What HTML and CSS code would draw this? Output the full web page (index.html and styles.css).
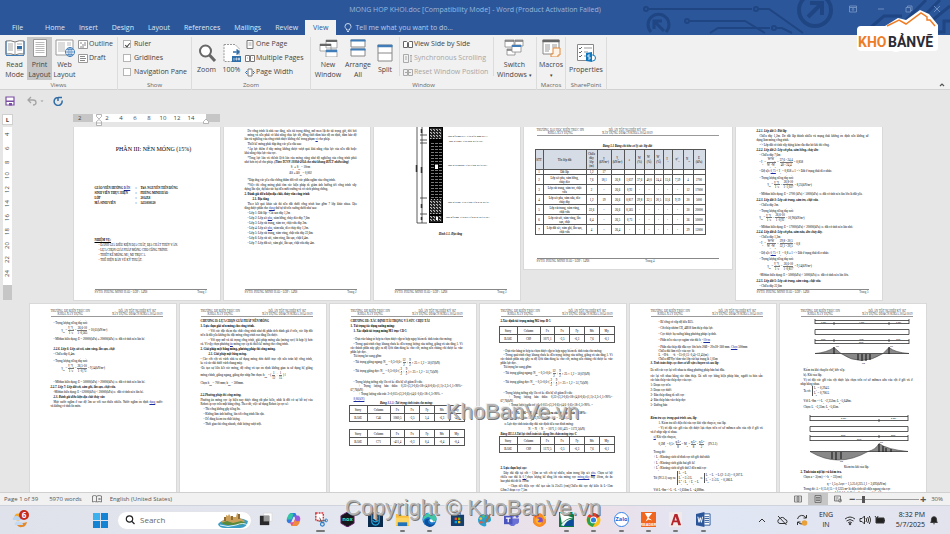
FILE: index.html
```html
<!DOCTYPE html>
<html lang="vi">
<head>
<meta charset="utf-8">
<title>MONG HOP KHOI.doc - Word</title>
<link rel="stylesheet" href="styles.css">
</head>
<body>
<header class="top">
  <svg class="circuit" viewBox="0 0 320 35" fill="none" stroke="#1f4583" stroke-width="2" aria-hidden="true">
    <circle cx="16" cy="9" r="2"/><path d="M19 9H122M129 9h10l34 24"/><circle cx="126" cy="9" r="2"/>
    <circle cx="57" cy="21" r="2"/><path d="M60 21h55l20 12M80 33l8-5h52"/><circle cx="144" cy="28" r="2"/><path d="M147 28h5l10 5"/>
    <path d="M21 32a10.500 10.500 0 1 1 15 0" stroke-width="3"/><path d="M34 31L24 21M24 29v-8h8" stroke-width="3"/>
    <circle cx="185" cy="10" r="16" stroke-width="4"/><path d="M178 17L191 4M180 3h12v12" stroke-width="4"/>
    <path d="M240 28l14-12h18M270 26l26-26M288 22L310 0M294 27l26-21M284 32h30V21h6" stroke-width="3"/>
  </svg>
  <div class="titlebar">
    <h1>MONG HOP KHOI.doc [Compatibility Mode] - Word (Product Activation Failed)</h1>
    <div class="wins">
      <button aria-label="Ribbon display"><svg viewBox="0 0 8 8"><path d="M.5 1h7v6h-7zM.5 2.500h7M4 6V3.500M3 4.500l1-1 1 1"/></svg></button>
      <button aria-label="Minimize"><svg viewBox="0 0 8 8"><path d="M1 4h6"/></svg></button>
      <button aria-label="Restore"><svg viewBox="0 0 8 8"><path d="M1 2.500h4.500V7H1zM2.500 2V1H7v4.500H6"/></svg></button>
      <button aria-label="Close"><svg viewBox="0 0 8 8"><path d="M1 1l6 6M7 1L1 7"/></svg></button>
    </div>
  </div>
  <nav class="tabs">
    <button class="file">File</button><button>Home</button><button>Insert</button><button>Design</button><button>Layout</button><button>References</button><button>Mailings</button><button>Review</button><button class="on">View</button>
    <label class="tell"><svg viewBox="0 0 8 10"><path d="M2.500 7V6C1.500 5 1 4.500 1 3.500a3 3 0 0 1 6 0C7 4.500 6.500 5 5.500 6v1zM3 8.500h2"/></svg><input type="text" placeholder="Tell me what you want to do..." aria-label="Tell me what you want to do"></label>
  </nav>
</header>

<svg class="logo" viewBox="0 0 86 44" role="img" aria-label="KHOBANVE">
  <path d="M1 21q0-4 4-4h24l13-8 8 2L64 1l9 4 9 11v23q0 3-4 3h-34q-4 2-8 0H5q-4 0-4-4z" fill="#fff"/>
  <path d="M31 17l12-6 7 4L65 4l6 4v3h3l5 6" fill="none" stroke="#ee7d27" stroke-width="1.500"/>
  <text x="2" y="38" fill="#ee7d27">KHO</text><text x="32" y="38" fill="#2b2b35">BẢNVẼ</text>
</svg>

<section class="ribbon">
  <div class="grp g-views">
    <div class="tools">
      <button class="big"><svg viewBox="0 0 20 18"><path d="M1 2q5-1 9 1 4-2 9-1v13q-5-1-9 1-4-2-9-1z" fill="#fff" stroke="#777"/><path d="M10 3v13M3 5h5M3 7h5M3 9h5M3 11h5M12 5h5M12 11h5" stroke="#aaa"/><path d="M1 16.500h18M1 2v14M19 2v14" stroke="#3f7cb8"/><path d="M12 7h5v3h-5z" fill="#2f6da8"/></svg>Read<br>Mode</button>
      <button class="big sel"><svg viewBox="0 0 20 18"><path d="M3.500.5h13v17h-13z" fill="#fff" stroke="#999"/><path d="M5.500 3.500h9M5.500 5.500h9M5.500 7.500h9M5.500 9.500h9M5.500 11.500h9M5.500 13.500h9" stroke="#bbb"/></svg>Print<br>Layout</button>
      <button class="big"><svg viewBox="0 0 20 18"><path d="M1 1h17v15H1z" fill="#fff" stroke="#999"/><path d="M3 4h7M3 6h7M3 8h7M3 10h7M3 12h7M12 4h4M12 6h4" stroke="#bbb"/><circle cx="15" cy="13" r="4.500" fill="#fff" stroke="#3f7cb8"/><path d="M10.500 13h9M15 8.500v9M12 10.500h6M12 15.500h6" stroke="#3f7cb8" stroke-width=".7"/><ellipse cx="15" cy="13" rx="2" ry="4.500" fill="none" stroke="#3f7cb8" stroke-width=".7"/></svg>Web<br>Layout</button>
      <div class="stack two">
        <button><svg viewBox="0 0 10 9"><path d="M.5.5h9v8h-9z" fill="#fff" stroke="#999"/><path d="M2 3h2M4 5h4M2 7h4M6 3h2" stroke="#888"/></svg>Outline</button>
        <button><svg viewBox="0 0 10 9"><path d="M.5.5h9v8h-9z" fill="#fff" stroke="#999"/><path d="M2 2.500h5M2 4.500h6M2 6.500h5" stroke="#888"/></svg>Draft</button>
      </div>
    </div><h2>Views</h2>
  </div>
  <div class="grp g-show">
    <div class="tools"><div class="stack">
      <label><input type="checkbox" checked>Ruler</label>
      <label><input type="checkbox">Gridlines</label>
      <label><input type="checkbox">Navigation Pane</label>
    </div></div><h2>Show</h2>
  </div>
  <div class="grp g-zoom">
    <div class="tools">
      <button class="big"><svg viewBox="0 0 20 18"><circle cx="8.500" cy="7" r="5.500" fill="#fff" stroke="#666" stroke-width="2"/><path d="M12.500 11l5.500 6" stroke="#666" stroke-width="3"/></svg>Zoom</button>
      <button class="big"><svg viewBox="0 0 20 18"><path d="M2 .5h11l4 4v13H2z" fill="#fff" stroke="#999" stroke-dasharray="2 1"/><path d="M11 8h6M14.500 5.500L17 8l-2.500 2.500" fill="none" stroke="#2f6da8" stroke-width="1.500"/><path d="M10 12h9v6h-9z" fill="#2f6da8"/><path d="M12 14v2.500M14 14h1v2h-1zM16.500 14h1v2h-1z" stroke="#fff" stroke-width=".6" fill="none"/></svg>100%</button>
      <div class="stack">
        <button><svg viewBox="0 0 10 9"><path d="M2 .5h6v8H2z" fill="#fff" stroke="#777"/><path d="M3.500 3h3M3.500 5h3" stroke="#aaa"/></svg>One Page</button>
        <button><svg viewBox="0 0 10 9"><path d="M.5 1.500h4v6h-4zM5.500 1.500h4v6h-4z" fill="#fff" stroke="#777"/><path d="M2 4h1M7 4h1" stroke="#aaa"/></svg>Multiple Pages</button>
        <button><svg viewBox="0 0 10 9"><path d="M3 1h4v7H3z" fill="#fff" stroke="#777"/><path d="M2 3L.5 4.500 2 6M8 3l1.500 1.500L8 6" fill="none" stroke="#2f6da8"/></svg>Page Width</button>
      </div>
    </div><h2>Zoom</h2>
  </div>
  <div class="grp g-window">
    <div class="tools">
      <button class="big w30"><svg viewBox="0 0 20 18"><path d="M8 1h11v8H8zM2 5h11v7H2zM8 11h11v7H8z" fill="#fff" stroke="#888" stroke-width=".7"/><path d="M8 2h11M2 6h11" stroke="#666" stroke-width="2"/><path d="M8 12h11" stroke="#3f7cb8" stroke-width="2.500"/></svg>New<br>Window</button>
      <button class="big w30"><svg viewBox="0 0 20 18"><path d="M3 1h14v7H3zM3 10h14v7H3z" fill="#fff" stroke="#888"/><path d="M2.500 1.500h15M2.500 10.500h15" stroke="#3f7cb8" stroke-width="2"/></svg>Arrange<br>All</button>
      <button class="big w24"><svg viewBox="0 0 20 18"><path d="M3 1h14v16H3zM3 9h14" fill="#fff" stroke="#888"/><path d="M2.500 2h15" stroke="#3f7cb8" stroke-width="2.500"/></svg>Split</button>
      <div class="stack edged">
        <button><svg viewBox="0 0 10 9"><path d="M.5 1.500h3l1 1v5h-4zM9.500 1.500h-3l-1 1v5h4z" fill="#fff" stroke="#666"/></svg>View Side by Side</button>
        <button disabled><svg viewBox="0 0 10 9"><path d="M.5.5h5v8h-5zM8 1v7M7 2l1-1 1 1M7 7l1 1 1-1M2 3h2M2 5h2" fill="none" stroke="#aaa"/></svg>Synchronous Scrolling</button>
        <button disabled><svg viewBox="0 0 10 9"><path d="M.5 1.500h4v6h-4zM5.500 1.500h4v6h-4zM2 4.500h6" fill="none" stroke="#aaa"/></svg>Reset Window Position</button>
      </div>
      <button class="big w37"><svg viewBox="0 0 20 18"><path d="M1 1h9v7H1zM11 1h8v6h-8zM3 10h8v6H3z" fill="#fff" stroke="#888" stroke-width=".8"/><path d="M1 2h9M11 2h8M3 11h5" stroke="#777" stroke-width="1.500"/><path d="M8 6h9v7H8z" fill="#fff" stroke="#888" stroke-width=".8"/><path d="M8 7h9" stroke="#3f7cb8" stroke-width="2"/></svg>Switch<br>Windows <small>▾</small></button>
    </div><h2>Window</h2>
  </div>
  <div class="grp">
    <div class="tools"><button class="big w29"><svg viewBox="0 0 20 18"><path d="M2 1h16v14H2z" fill="#fff" stroke="#888"/><path d="M1.500 2h17" stroke="#666" stroke-width="2.500"/><path d="M4 6h5M4 8h5M4 10h5M4 12h4M11 6h5M11 8h5" stroke="#999"/><path d="M12 9h7v7h-2v2h-7v-3h2z" fill="#fdf3e7" stroke="#e08a3c"/></svg>Macros<br><small>▾</small></button></div><h2>Macros</h2>
  </div>
  <div class="grp">
    <div class="tools"><button class="big w40"><svg viewBox="0 0 20 18"><path d="M1.500.5h16v16h-16z" fill="#fff" stroke="#888"/><path d="M3 4l1 1 2-2M3 8l1 1 2-2M3 12l1 1 2-2" fill="none" stroke="#666"/><path d="M8 4h8M8 8h4M8 12h3" stroke="#999"/><circle cx="16.500" cy="14" r="3" fill="#fff" stroke="#1177bd"/><path d="M10 9l6-1v10l-6-1z" fill="#1177bd"/><path d="M14 11h-2v2h2v2h-2" fill="none" stroke="#fff" stroke-width=".8"/></svg>Properties</button></div><h2>SharePoint</h2>
  </div>
  <button class="fold" aria-label="Collapse ribbon"><svg viewBox="0 0 6 5"><path d="M1 4l2-2 2 2" fill="none" stroke="#555" stroke-width="1.200"/></svg></button>
</section>

<div class="qat">
  <button aria-label="Save"><svg viewBox="0 0 10 10"><path d="M1 1h8v8H1z" fill="#fff" stroke="#7a4fa3" stroke-width="1.200"/><path d="M1 4.500h8v1.500H1z" fill="#7a4fa3"/><path d="M4 7h3v2.500H4z" fill="#7a4fa3"/></svg></button>
  <button aria-label="Undo"><svg viewBox="0 0 10 10"><path d="M1 4h5q3 0 3 2.500T6 9M4 1L1 4l3 3" fill="none" stroke="#a5a5a5" stroke-width="1.300"/></svg></button>
  <button class="dd" aria-label="Undo list"><svg viewBox="0 0 4 10"><path d="M.5 4.500h3L2 6z" fill="#999"/></svg></button>
  <button class="again" aria-label="Repeat"><svg viewBox="0 0 10 10"><path d="M6 1.500A4 4 0 1 0 9 4.500M5 1v4M5 1.500h4" fill="none" stroke="#2f6da8" stroke-width="1.500"/></svg></button>
</div>

<div class="rulerrow">
  <button class="tabstop" aria-label="Left tab">L</button>
  <div class="hruler"><span class="m">2</span><span class="w"><i>2</i><i>4</i><i>6</i><i>8</i><i>10</i><i>12</i><i>14</i></span><span class="m"></span>
    <svg class="mk first" viewBox="0 0 6 12"><path d="M.5.5h5v2L3 5 .5 2.500zM.5 11.500v-4L3 5.500l2.500 2v4zM.5 9h5" fill="#fff" stroke="#999" stroke-width=".7"/></svg>
    <svg class="mk last" viewBox="0 0 6 12"><path d="M.5 9.500v-2L3 5l2.500 2.500v2z" fill="#fff" stroke="#999" stroke-width=".7"/></svg>
  </div>
</div>

<main class="work">
  <div class="vruler"><i>4</i><i>6</i><i>8</i><i>10</i><i>12</i><i>14</i><i>16</i><i>18</i><i>20</i><i>22</i><i>24</i></div>
  <div class="canvas">
    <div class="prow r1">
      <article class="page">
        <h3 class="cover">PHẦN III: NỀN MÓNG (15%)</h3>
        <div class="who"><span>GIÁO VIÊN HƯỚNG <u>DẪN</u></span><span>:</span><span>ThS. NGUYỄN TIẾN DŨNG</span><span>SINH VIÊN THỰC HIỆN</span><span>:</span><span>PHÙNG MINH HÀO</span><span>LỚP</span><span>:</span><span>2014X8</span><span>MÃ SINH VIÊN</span><span>:</span><span>1451030120</span></div>
        <div class="task"><p class="b ul">NHIỆM VỤ:</p><p>- ĐÁNH GIÁ ĐIỀU KIỆN ĐỊA CHẤT, ĐỊA CHẤT THỦY VĂN.</p><p>- LỰA CHỌN GIẢI PHÁP MÓNG CHO CÔNG TRÌNH.</p><p>- THIẾT KẾ MÓNG M1, M2 TRỤC 5.</p><p>- THỂ HIỆN BẢN VẼ KỸ THUẬT.</p></div>
        <footer><span>SVTH: PHÙNG MINH HÀO - LỚP : 14X8</span><span>Trang 1</span></footer>
      </article>
      <article class="page t2">
        <p class="j in">Do công trình là nhà cao tầng, nên tải trọng đứng, mô men lật do tải trọng gió, đòi hỏi<br>móng và nền phải có khả năng chịu lực tốt, đồng thời đảm bảo độ ổn định, đảm bảo độ</p>
        <p>lún và nghiêng của công trình được khống chế trong phạm <u>vi</u> cho phép.</p>
        <p class="s1 in">Thiết kế móng phải đáp ứng các yêu cầu sau:</p>
        <p class="s1 j in">*Áp lực thêm ở đáy móng không được vượt quá khả năng chịu lực của nền đất hoặc</p><p>khả năng chịu lực của cọc.</p>
        <p class="s1 j in">*Tổng lực lún và chênh lệch lún của móng cũng như độ nghiêng của công trình phải</p><p>nhỏ hơn trị số cho phép. <b><i>(Theo TCVN 10304-2014 cho nhà khung BTCT nhiều tầng)</i></b></p>
        <p class="s1 c">S<sub>x</sub> ≤ S<sub>gh</sub> = 10cm</p><p class="s1 c">ΔS ≤ ΔS<sub>gh</sub> = 0,002</p>
        <p class="s3 in">*Đáp ứng các yêu cầu chống thấm đối với các phần ngầm của công trình.</p>
        <p class="s1 j in">*Việc thi công móng phải tìm các biện pháp để giảm ảnh hưởng tới công trình xây</p><p>dựng lân cận, dự báo tác hại đến môi trường và có cách phòng chống.</p>
        <p class="s1 b">2. Đánh giá điều kiện địa chất, thủy văn công trình</p><p class="s1 b in2">2.1. Địa tầng</p>
        <p class="s1 j in">Theo kết quả khảo sát thì nền đất dưới công trình bao gồm 7 lớp khác nhau. Địa</p><p>tầng được phân cho <u>dạng</u> thứ tự từ trên xuống dưới như sau:</p>
        <div class="list in"><p>- Lớp 1: Đất lấp - Cát san dày 1,2m</p><p>- Lớp 2: Lớp sét <u>pha</u>, xám hồng, chảy dẻo dày 7,6m</p><p>- Lớp 3: Lớp cát trung, xám tro, chặt vừa dày 2m.</p><p>- Lớp 4: Lớp sét <u>pha</u>, xám nâu, dẻo chảy dày 1,2m.</p><p>- Lớp 5: Lớp cát trung, xám vàng, chặt vừa dày 22,6m.</p><p>- Lớp 6: Lớp cát sỏi, xám vàng, lẫn sạn, chặt 6,4m.</p><p>- Lớp 7: Lớp đất sét, xám ghi, lẫn sạn, chặt vừa dày 4m.</p></div>
        <footer><span>SVTH: PHÙNG MINH HÀO - LỚP : 14X8</span><span>Trang 2</span></footer>
      </article>
      <article class="page">
        <svg class="bore" viewBox="0 0 100 98">
          <defs><pattern id="dots" width="3" height="3" patternUnits="userSpaceOnUse"><path d="M0 0h3v3H0z" fill="#222"/><path d="M0 1l1-1M2 2l1 1M0 3h1" stroke="#fff" stroke-width=".7"/></pattern>
          <pattern id="dash" width="4" height="3" patternUnits="userSpaceOnUse"><path d="M0 0h4v3H0z" fill="#000"/><path d="M0 1.500h3" stroke="#aaa" stroke-width=".7"/></pattern></defs>
          <path d="M34 0h14v96H34z" fill="#000"/><path d="M35 1h12v11H35zM35 72h12v15H35z" fill="url(#dots)"/><path d="M35 16h12v55H35z" fill="url(#dash)"/><path d="M35 89h12v6H35z" fill="url(#dots)"/>
          <path d="M40 38h3v4h-3zM41 90h2v3h-2z" fill="#fff"/>
          <path d="M22 0v96h10M27 0v96M25 8h7M25 13h7M25 16h7M25 71h7M25 87h7" stroke="#333" fill="none" stroke-width=".8"/>
          <path d="M21.500 38v7M26.500 40v6M26.500 77v4M26.500 90v3M26.500 2v4" stroke="#333" stroke-width="1.500"/>
          <text x="53" y="10">LỚP ĐẤT SÉT PHA, XÁM NÂU, DẺO CHẢY</text><text x="54" y="15">LỚP CÁT BỤI, XÁM TRO, CHẶT VỪA</text><text x="53" y="39">LỚP CÁT TRUNG, XÁM VÀNG, CHẶT VỪA</text><text x="53" y="76">LỚP CÁT SỎI, XÁM VÀNG, LẪN SẠN, CHẶT</text><text x="51" y="91">LỚP ĐẤT SÉT, XÁM GHI, LẪN SẠN, CHẶT VỪA</text>
        </svg>
        <p class="c b it cap">Hình 1.1. Địa tầng</p>
        <footer><span>SVTH: PHÙNG MINH HÀO - LỚP : 14X8</span><span>Trang 3</span></footer>
      </article>
      <article class="page land">
        <div class="hd"><span>TRƯỜNG ĐẠI HỌC KIẾN TRÚC HN<br>KHOA XÂY DỰNG</span><span>ĐỒ ÁN TỐT NGHIỆP KỸ SƯ<br>XÂY DỰNG DD&amp;CN KHÓA 2014-2019</span></div>
        <p class="c b it cap4">Bảng 1.1 Bảng chỉ tiêu cơ lý các lớp đất</p>
        <table class="soil">
          <colgroup><col class="c8"><col><col class="c11"><col class="c14"><col class="c13"><col class="c11"><col class="c9"><col class="c10"><col class="c9"><col class="c9"><col class="c11"><col class="c10"><col class="c12"></colgroup>
          <tr><th>STT</th><th>Tên lớp đất</th><th>Chiều<br>dày<br>lớp<br>(m)</th><th>γ<br>(kN/m³)</th><th>γ<sub>s</sub><br>(kN/m³)</th><th>e</th><th>W<br>(%)</th><th>W<sub>L</sub><br>(%)</th><th>W<sub>P</sub><br>(%)</th><th>I<sub>L</sub></th><th>φ°<sub>c</sub></th><th>N<sub>30</sub></th><th>E<br>(kPa)</th></tr>
          <tr class="lo"><td>1</td><td>Đất lấp</td><td>1,2</td><td>17</td><td></td><td></td><td></td><td></td><td></td><td></td><td></td><td></td><td></td></tr>
          <tr><td>2</td><td>Lớp sét pha, xám hồng,<br>chảy dẻo</td><td>7,6</td><td>18,1</td><td>26,8</td><td>1,037</td><td>37,6</td><td>40,0</td><td>24,4</td><td>15,6</td><td>7,59</td><td>4</td><td>2700</td></tr>
          <tr><td>3</td><td>Lớp cát trung, xám tro, chặt<br>vừa</td><td>2</td><td>-</td><td>26,6</td><td>0,92</td><td>-</td><td>-</td><td>-</td><td>-</td><td>-</td><td>12</td><td>17000</td></tr>
          <tr><td>4</td><td>Lớp sét pha, xám nâu, dẻo<br>chảy dày</td><td>1,2</td><td>19</td><td>26,6</td><td>0,817</td><td>29,8</td><td>32,1</td><td>20,5</td><td>11,6</td><td>9,19</td><td>20</td><td>5000</td></tr>
          <tr><td>5</td><td>Lớp cát trung, xám vàng,<br>chặt vừa</td><td>22,6</td><td>-</td><td>26,6</td><td>0,565</td><td>-</td><td>-</td><td>-</td><td>-</td><td>-</td><td>30</td><td>20000</td></tr>
          <tr><td>6</td><td>Lớp cát sỏi, xám vàng, lẫn<br>sạn, chặt</td><td>6,4</td><td>-</td><td>26,5</td><td>0,73</td><td>-</td><td>-</td><td>-</td><td>-</td><td>-</td><td>36</td><td>50000</td></tr>
          <tr><td>7</td><td>Lớp đất sét, xám ghi, lẫn sạn,<br>chặt vừa</td><td>4</td><td>-</td><td>26,4</td><td>-</td><td>-</td><td>-</td><td>-</td><td>-</td><td>-</td><td>29</td><td>12000</td></tr>
        </table>
        <footer><span>SVTH: PHÙNG MINH HÀO - LỚP : 14X8</span><span class="mid">Trang 4</span></footer>
      </article>
      <article class="page t2">
        <p class="b it">2.2.1. Lớp đất 1: Đất lấp</p>
        <p class="s1 j in">Chiều dày 1,2m. Do đất lấp thành nhiều và mạng thái không ổn định nên không sử</p><p>dụng làm móng công trình.</p>
        <p class="s1 in">=&gt; Lớp đất có tính xây dựng kém cần đào bỏ khi thi công.</p>
        <p class="s1 b it">2.2.2. Lớp đất 2: Lớp sét pha, xám hồng, chảy dẻo</p>
        <p class="s1 in">- Chiều dày 7,6m</p>
        <div class="f in"><span>- I<sub>L</sub> =</span><span class="fr"><span>W-W<sub>P</sub></span><span>W<sub>L</sub>-W<sub>P</sub></span></span><span>=</span><span class="fr"><span>37,6 - 24,4</span><span>40 - 24,4</span></span><span>= 0,858</span></div>
        <p class="s2 in">- Độ sệt: <u>0,75</u> &lt; I<sub>L</sub> = 0,858 ≤ 1 =&gt; Đất ở trạng thái dẻo nhão.</p>
        <p class="s2 in">- Trọng lượng riêng đẩy nổi:</p>
        <div class="f in3"><span>γ<sub>đn</sub> =</span><span class="fr"><span>γ<sub>s</sub>-γ<sub>n</sub></span><span>1+e</span></span><span>=</span><span class="fr"><span>26,8-10</span><span>1+1,037</span></span><span>= 8,25(kN/m³)</span></div>
        <p class="s2 in">- Môđun biến dạng: E = 2700 (kPa) &lt; 5000(kPa) ⇒ đất có tính nén lún lớn là đất yếu.</p>
        <p class="s2 b it">2.2.3. Lớp đất 3: Lớp cát trung, xám tro, chặt vừa.</p>
        <p class="s1 in">- Chiều dày 2m.</p><p class="s2 in">- Trọng lượng riêng đẩy nổi:</p>
        <div class="f in"><span>γ<sub>đn</sub> =</span><span class="fr"><span>γ<sub>s</sub>-γ<sub>n</sub></span><span>1+e</span></span><span>=</span><span class="fr"><span>26,6-10</span><span>1+0,92</span></span><span>= 10,90(kN/m³)</span></div>
        <p class="s2 in">- Môđun biến dạng: E = 17000(kPa) &lt; 20000(kPa) ⇒ đất có tính nén lún nhỏ.</p>
        <p class="s1 b it">2.2.4. Lớp đất 4: Lớp sét pha, xám nâu, dẻo chảy dày.</p>
        <p class="s1 in">- Chiều dày 1,2m</p>
        <div class="f in"><span>- I<sub>L</sub> =</span><span class="fr"><span>W-W<sub>P</sub></span><span>W<sub>L</sub>-W<sub>P</sub></span></span><span>=</span><span class="fr"><span>29,8 - 20,5</span><span>32,1 - 20,5</span></span><span>= 0,8</span></div>
        <p class="s2 in">- Độ sệt: <u>0,75</u> &lt; I<sub>L</sub> = 0,8 ≤ 1 =&gt; Đất ở trạng thái dẻo nhão.</p>
        <p class="s2 in">- Trọng lượng riêng đẩy nổi:</p>
        <div class="f in3"><span>γ<sub>đn</sub> =</span><span class="fr"><span>γ<sub>s</sub>-γ<sub>n</sub></span><span>1+e</span></span><span>=</span><span class="fr"><span>26,6-10</span><span>1+0,817</span></span><span>= 9,14(kN/m³)</span></div>
        <p class="s2 in">-Môđun biến dạng: E = 5000(kPa) &lt; 5000(kPa) ⇒ đất có tính nén lún lớn.</p>
        <p class="s2 b it">2.2.5. Lớp đất 5: Lớp cát trung, xám vàng, chặt vừa.</p>
        <p class="s1 in">- Chiều dày 22,6m</p>
        <footer><span>SVTH: PHÙNG MINH HÀO - LỚP : 14X8</span><span>Trang 5</span></footer>
      </article>
    </div>

    <div class="prow r2">
      <article class="page">
        <div class="hd"><span>TRƯỜNG ĐH KIẾN TRÚC HN<br>KHOA XÂY DỰNG</span><span>ĐỒ ÁN TỐT NGHIỆP KỸ SƯ<br>XÂY DỰNG DD&amp;CN KHÓA 2014-2019</span></div>
        <p class="s4 in">- Trọng lượng riêng đẩy nổi:</p>
        <div class="f in3"><span>γ<sub>đn</sub> =</span><span class="fr"><span>γ<sub>s</sub>-γ<sub>n</sub></span><span>1+e</span></span><span>=</span><span class="fr"><span>26,6-10</span><span>1+0,565</span></span><span>= 10,61(kN/m³)</span></div>
        <p class="s2 in">- Môđun biến dạng: E = 20000(kPa) ≤ 20000(kPa) ⇒ đất có tính nén lún bé</p>
        <p class="s6 b it in">2.2.6. Lớp 6: Lớp cát sỏi, xám vàng, lẫn sạn, chặt</p>
        <p class="s1 in">- Chiều dày 6,4m.</p><p class="s3 in">- Trọng lượng riêng đẩy nổi:</p>
        <div class="f in3"><span>γ<sub>đn</sub> =</span><span class="fr"><span>γ<sub>s</sub>-γ<sub>n</sub></span><span>1+e</span></span><span>=</span><span class="fr"><span>26,5-10</span><span>1+0,73</span></span><span>= 9,54(kN/m³)</span></div>
        <p class="s7 in">- Môđun biến dạng: E = 50000(kPa) &gt; 20000(kPa) ⇒ đất có tính nén lún bé.</p>
        <p class="s1 b it">2.2.7. Lớp 7: Lớp đất sét, xám ghi, lẫn sạn, chặt vừa.</p>
        <p class="s1 in">-Môđun biến dạng: E =12000(kPa) &lt; 20000(kPa) ⇒ đất có tính nén lún bé.</p>
        <p class="s1 b it in">2.3. Đánh giá điều kiện địa chất thủy văn</p>
        <p class="s1 j in">Mực nước ngầm ở cao độ 3m so với cao thiên nhiên. Nước ngầm ổn định <u>dạng</u> nước</p><p>và không có tính ăn mòn.</p>
      </article>
      <article class="page">
        <div class="hd"><span>TRƯỜNG ĐH KIẾN TRÚC HN<br>KHOA XÂY DỰNG</span><span>ĐỒ ÁN TỐT NGHIỆP KỸ SƯ<br>XÂY DỰNG DD&amp;CN KHÓA 2014-2019</span></div>
        <p class="s2 b">CHƯƠNG II: LỰA CHỌN GIẢI PHÁP NỀN MÓNG</p>
        <p class="s1 b">1. Lựa chọn giải nền móng cho công trình.</p>
        <p class="s1 j in2">- Với các đặc điểm địa chất công trình như đã phân tích đánh giá ở trên, các lớp đất</p><p>trên là đất yếu không thể đặt móng công trình cao tầng lên được.</p>
        <p class="s1 j in2">- Với quy mô và tải trọng công trình, giải pháp móng sâu (móng cọc) là hợp lý hơn</p><p>cả. Vì vậy chọn phương <u>án</u> móng cọc ép để thiết kế móng cho công trình.</p>
        <p class="s1 b">2. Giải pháp mặt bằng móng, phương pháp thi công móng.</p><p class="s1 b it in2">2.1. Giải pháp mặt bằng móng.</p>
        <p class="s1 j">- Các cốt cột và vách nhà ta sử dụng móng đơn dưới trục cột nên toàn bộ công trình,</p><p>kể cả các đài dưới vách thang máy.</p>
        <p class="s1 j">-Để tạo sự liên kết các móng, độ cứng và tạo ổn định không gian ta sử dụng hệ giằng</p>
        <div class="f"><span>móng chính, giằng ngang, giằng dọc nhịp 9m chọn: h<sub>gm</sub> = (</span><span class="fr"><span>1</span><span>12</span></span><span>÷</span><span class="fr"><span>1</span><span>15</span></span><span>) l</span></div>
        <p class="s1">Chọn h<sub>gm</sub> = 700 mm; b<sub>gm</sub> = 300mm.</p>
        <p class="s7 b it">2.2.Phương pháp thi công móng.</p>
        <p class="s1 j">Phương án móng cọc ép hiện nay được dùng rất phổ biến, nhất là đối có sự hỗ trợ của</p><p>Robot ép cọc trên mặt bằng rộng. Theo đó, việc sử dụng Robot ép cọc sẽ:</p>
        <div class="list in"><p>- Thi công không gây tiếng ồn.</p><p>- Không làm ảnh hưởng, lún tới công trình lân cận.</p><p>- Dễ dàng kiểm tra chất lượng.</p><p>- Thời gian thi công nhanh, chất lượng vượt trội.</p></div>
      </article>
      <article class="page calc">
        <div class="hd"><span>TRƯỜNG ĐH KIẾN TRÚC HN<br>KHOA XÂY DỰNG</span><span>ĐỒ ÁN TỐT NGHIỆP KỸ SƯ<br>XÂY DỰNG DD&amp;CN KHÓA 2014-2019</span></div>
        <p class="s2 b">CHƯƠNG III: XÁC ĐỊNH TẢI TRỌNG VÀ SỨC CHỊU TẢI</p>
        <p class="s1 b">1. Tải trọng tác dụng xuống móng:</p><p class="s1 b in">1. Xác định tải trọng móng M1 trục CD-5</p>
        <p class="s4 in">- Dựa vào bảng tổ hợp ta chọn được cặp tổ hợp nguy hiểm để tính toán cho móng:</p>
        <p class="s1 j in">- Trong quá trình chạy khung chưa kể đến trọng lượng của tường, giằng và sàn tầng 1. Vì</p><p class="j">các thành phần này gây ra độ lệch tâm đáng kể cho cốt, móng nên chúng chỉ được kể vào</p><p>phần lực dọc.</p><p class="in">Tải trọng bổ sung gồm:</p>
        <div class="f in"><span>- Tải trọng giằng ngang: N<sub>gn</sub> = 0,3×0,6×</span><span class="fr"><span>12</span><span>2</span></span><span>+</span><span class="fr"><span>9</span><span>2</span></span><span>× 25 × 1,2 = 50,67(kN)</span></div>
        <div class="f in"><span>- Tải trọng giằng dọc: N<sub>gd</sub> = 0,3×0,6×(</span><span class="fr"><span>2</span><span>2</span></span><span>+</span><span class="fr"><span>9</span><span>2</span></span><span>) × 25 × 1,2 = 51,75(kN)</span></div>
        <p class="s4 in">- Trọng lượng tường xây lên có kể đến hệ số giảm lỗ cửa:</p>
        <p class="j in2">+ Trọng lượng bản thân: 0,22×(3,3-0,6)×18×(4,6-0,6)×(1,1)×3,3×1,1×90%=</p><p>67,76(kN)</p><p class="in2">+ Trọng lượng vữa trát: 2×0,015×(3,3-0,6)×(4,6+0,6)×18×1,3×90%. =</p><p class="s1 in"><u>8,86(kN)</u></p>
        <p class="c b it">Bảng <u>3.1.1</u>: Tải trọng tính toán cho móng:</p>
        <table class="load"><tr><th>Story</th><th>Column</th><th>Fx</th><th>Fx</th><th>Fy</th><th>Mx</th><th>My</th></tr><tr><td>BASE</td><td>C46</td><td>1060,5</td><td>-3,5</td><td>5,4</td><td>-6,3</td><td>-4,5</td></tr></table>
        <table class="load s7"><tr><th>Story</th><th>Column</th><th>Fx</th><th>Fx</th><th>Fy</th><th>Mx</th><th>My</th></tr><tr><td>BASE</td><td>C71</td><td>-411,4</td><td>-0,3</td><td>0,4</td><td>-0,4</td><td>-0,4</td></tr></table>
      </article>
      <article class="page calc">
        <div class="hd"><span>TRƯỜNG ĐH KIẾN TRÚC HN<br>KHOA XÂY DỰNG</span><span>ĐỒ ÁN TỐT NGHIỆP KỸ SƯ<br>XÂY DỰNG DD&amp;CN KHÓA 2014-2019</span></div>
        <p class="s2 b">2.Xác định tải trọng móng M2 trục B-5</p>
        <table class="load s3"><tr><th>Story</th><th>Column</th><th>Fx</th><th>Fx</th><th>Fy</th><th>Mx</th><th>My</th></tr><tr><td>BASE</td><td>C89</td><td>1071,1</td><td>-3,5</td><td>-6,3</td><td>7,6</td><td>-6,1</td></tr></table>
        <p class="s6 in">- Dựa vào bảng tổ hợp ta chọn được cặp tổ hợp nguy hiểm để tính toán cho móng:</p>
        <p class="j in">- Trong quá trình chạy khung chưa kể đến trọng lượng của tường, giằng và sàn tầng 1. Vì</p><p class="j">các thành phần này gây ra độ lệch tâm đáng kể cho cốt, móng nên chúng chỉ được kể vào</p><p>phần lực dọc.</p><p class="in">Tải trọng bổ sung gồm:</p>
        <div class="f in"><span>- Tải trọng giằng ngang: N<sub>gn</sub> = 0,3×0,6×</span><span class="fr"><span>12</span><span>2</span></span><span>+</span><span class="fr"><span>9</span><span>2</span></span><span>× 25 × 1,2 = 50,67(kN)</span></div>
        <div class="f in"><span>- Tải trọng giằng dọc: N<sub>gd</sub> = 0,3×0,6×(</span><span class="fr"><span>2</span><span>2</span></span><span>+</span><span class="fr"><span>9</span><span>2</span></span><span>) × 25 × 1,2 = 51,75(kN)</span></div>
        <p class="s4 in">- Trọng lượng tường xây lên có kể đến hệ số giảm lỗ cửa:</p>
        <p class="j in2">+ Trọng lượng bản thân: 0,22×(3,3-0,6)×18×(4,6-0,6)×(1,1)×3,3×1,1×90%=</p><p>67,76(kN)</p><p class="in2">+ Trọng lượng vữa trát: 2×0,015×(3,3-0,6)×(4,6+0,6)×18×1,3×90%. =</p>
        <p class="s4 b in">Tổng: 67,76+8,86 = 76,6 (kN). Ngoài ra còn tải trọng sàn là 10%:</p><p class="s1 in">⇒ Trọng lượng sàn: N<sub>s</sub> = 3,95×25×1,1×0,1 = 10,86 (kN)</p><p class="s1 in">⇒ Lực dọc tính toán đáy đài xác định tiêu cao đỉnh móng:</p><p class="s1 c">N<sub>tt</sub> = N<sub>1</sub> + N<sub>bs</sub> = 1071,1+101,425 = 1172,5(kN)</p>
        <p class="s1 b it">Bảng III.1.3.Tải lực tính toán tác dụng lên chân móng trục C</p>
        <table class="load"><tr><th>Story</th><th>Column</th><th>Fx</th><th>Fx</th><th>Fy</th><th>Mx</th><th>My</th></tr><tr><td>BASE</td><td>C89</td><td>1172,5</td><td>-3,5</td><td>-6,3</td><td>7,6</td><td>-6,1</td></tr></table>
        <p class="s12 b">2. Lựa chọn loại cọc:</p>
        <p class="s1 j in">Đáy đài đặt tại cốt - 1,6m so với cốt tự nhiên, nằm trong lớp sét <u>pha</u>. Chọn sơ bộ</p>
        <p class="j">chiều cao đài là <u>0,7</u>,chọn lượng bê tông lót của móng cọc <u>móng,đáy</u> dày 10cm, do ăn</p><p>bao phủ đài đó là 10cm</p><p class="s1 j in2">- Chọn tiết diện cọc chế tạo sẵn là 25x25 (cm),Chiều dài cọc dự kiến là L=15m</p><p>Gồm 2 đoạn <u>cọc</u> 7,5m</p>
      </article>
      <article class="page">
        <div class="hd"><span>TRƯỜNG ĐH KIẾN TRÚC HN<br>KHOA XÂY DỰNG</span><span>ĐỒ ÁN TỐT NGHIỆP KỸ SƯ<br>XÂY DỰNG DD&amp;CN KHÓA 2014-2019</span></div>
        <div class="list in2 first"><p>- Bê tông có cấp độ bền B25.</p><p>- Cốt thép nhóm CII, 4Ø18 làm thép chịu lực.</p><p>- Cọc được hạ xuống bằng phương pháp ép tĩnh.</p><p>- Phần trên của cọc ngàm vào đài h<sub>1</sub>=<u>10cm</u></p><p>- Phần râu thép đặt đầu cọc lớn hơn 20Ø = 20x18=360 mm. <u>Chọn</u> 500mm</p></div>
        <p class="in2">Chiều dài làm việc của cọc là:</p><p class="in2">L<sub>c</sub> =H-h<sub>ngàm</sub>-h<sub>1</sub> =15-(0,15+0,4)=12,45(m)</p><p class="in2">Chiều dài cọc cắm vào lớp cát hạt trung là 1,05m</p>
        <p class="b it">3. Tính toán thép cọc theo sơ đồ vận chuyển và cẩu lắp</p>
        <p class="s3">Để nối các cọc lại với nhau ta dùng phương pháp hàn hai đầu.</p>
        <p class="s2 j">các lại với nhau bằng các tấm thép. Để nối cọc bằng biện pháp hàn, người ta hàn sẵn</p><p>các bản thép vào thép dọc của cọc.</p>
        <div class="list"><p>1: Đoạn cọc trên</p><p>2: Đoạn cọc dưới</p><p>3- Bản thép dùng để nối cọc</p><p>4- Bản thép hàn vào thép dọc</p><p>5- Đường hàn</p></div>
        <p class="s8 b it">Kiểm tra cọc trong quá trình cẩu, lắp</p><p class="s1 in2">1. Kiểm tra tiết diện thi của cọc khi vận chuyển, cẩu lắp.</p>
        <p class="s1 j in2">- Vị trí đặt các gối của cột được lựa chọn trên cơ sở mômen uốn của cột ở gối và</p><p>và ở nhịp xấp xỉ nhau.</p><p class="s1 in"><u>a)</u> Khi vận chuyển,</p>
        <div class="f in2"><span>0,5M<sub>1</sub> = 0,5×</span><span class="fr"><span>q.L²</span><span>8</span></span><span>= M<sub>2</sub> =</span><span class="fr"><span>q.L²</span><span>8</span></span><span>-</span><span class="fr"><span>q.L²</span><span>2</span></span><span>&nbsp; &nbsp; (IV.3.1)</span></div>
        <p class="s1 in">Trong đó:</p><div class="list in"><p>+ L<sub>1</sub>: Khoảng cách từ đỉnh cọc tới gối thứ nhất</p><p>+ L<sub>2</sub>: Khoảng cách giữa hai gối kê</p><p>+ L<sub>3</sub>: Khoảng cách từ gối thứ 2 đến mũi cọc</p></div>
        <div class="f tall in"><span>Từ (IV.3.1) suy ra:</span><span class="sys">L<sub>1</sub> = L<sub>3</sub><br>L<sub>2</sub> = 2√2.L<sub>1</sub><br>L<sub>1</sub> + L<sub>2</sub> + L<sub>3</sub> = L</span><span>⇒</span><span class="sys">L<sub>1</sub> = L<sub>3</sub> = L/(2+2√2) = 0,207.L<br>L<sub>2</sub> = 2√2.L<sub>1</sub> = 0,586.L</span></div>
        <p class="s3 in">Với L=8m=&gt; L<sub>1</sub>=L<sub>3</sub>=1,656m; L<sub>2</sub>=4,688m.</p>
      </article>
      <article class="page">
        <div class="hd"><span>TRƯỜNG ĐH KIẾN TRÚC HN<br>KHOA XÂY DỰNG</span><span>ĐỒ ÁN TỐT NGHIỆP KỸ SƯ<br>XÂY DỰNG DD&amp;CN KHÓA 2014-2019</span></div>
        <svg class="beam b1" viewBox="0 0 112 48">
          <path d="M14 3.500h94M14 6.500h94M14 12.500h94v5H14zM14 23.500h94M14 26.500h94M14 2v5M108 2v5M33 5v3M88 5v3M14 22v5M108 22v5M33 22v3M88 22v3" fill="none" stroke="#333" stroke-width=".8"/>
          <path d="M14 36.500h94" stroke="#333" stroke-width=".8"/><path d="M14 36.500q12-1 19-6l7 6zM40 36.500q20 14 42 0zM82 36.500l6-6q6 5 20 6z" fill="#888" stroke="#444" stroke-width=".6"/><path d="M33 30v7M57 37v6M61 37v7M65 37v7M69 37v6M88 30v7" stroke="#111"/>
          <text x="20" y="6">1.656</text><text x="58" y="6">4.688</text><text x="95" y="6">1.656</text><text x="20" y="23">1656</text><text x="58" y="23">4688</text><text x="95" y="23">1656</text><text x="58" y="26">8000</text><text x="35" y="30">M1</text><text x="61" y="47">M2</text><text x="89" y="30">M1</text>
        </svg>
        <p class="in">Kiểm tra khi chuyên chở, bốc xếp.</p><p class="s1 in">b). Khi cẩu lắp.</p>
        <p class="s1 j in">Vị trí đặt các gối của cột được lựa chọn trên cơ sở mômen uốn của cột ở gối và ở</p><p>nhịp bằng nhau.</p>
        <div class="f in"><span>Ta có:</span><span class="sys">L<sub>1</sub> = 0,294.L<br>L<sub>2</sub> = 0,706.L</span></div>
        <p class="s3 in">Với L=8m =&gt; L<sub>1</sub> =2,352m; L<sub>2</sub>=5,648m.</p><p class="s1 in">Chọn: L<sub>1</sub> =2,35m; L<sub>2</sub>=5,65m.</p>
        <svg class="beam b2" viewBox="0 0 112 56">
          <path d="M9 7.500h98M9 11.500h98M9 17.500h98v5H9zM9 27.500h98M9 31.500h98M9 6v6M107 6v6M78 10v3M9 26v6M107 26v6M78 26v3" fill="none" stroke="#333" stroke-width=".8"/>
          <path d="M9 42.500h98" stroke="#333" stroke-width=".8"/><path d="M9 42.500q28 17 58 0zM67 42.500q8-2 11-8 8 6 29 8z" fill="#888" stroke="#444" stroke-width=".6"/><path d="M31 43v7M35 43v8M40 43v7M78 35v8M82 37v6M85 39v4M90 40v3" stroke="#111"/>
          <text x="40" y="10">5.650</text><text x="90" y="10">2.350</text><text x="40" y="27">5650</text><text x="90" y="27">2350</text><text x="56" y="31">8000</text><text x="79" y="34">M1</text><text x="39" y="53">M2</text>
        </svg>
        <p class="c">Kiểm tra khi cẩu lắp.</p><p class="s1 b">2. Tính toán nội lực và kiểm tra.</p><p class="s1 in">Chọn a = 3(cm) =&gt; h<sub>0</sub> = 22(cm)</p><p class="s2 c">q = 1,5.γ.Acọc = 1,5.25.0,225.1,1 = 3,693(kN/m)</p><p class="s1 in">Trong đó: A = 0,15.0,15 = 0,1225 m² là diện tích tiết diện ngang của cọc</p><p class="c">γ = 1,1 là hệ số độ tin cậy tải trọng bản thân</p>
      </article>
    </div>
  </div>
  <div class="mark mark1">KhoBanVe.vn</div>
</main>

<footer class="status">
  <span class="pg">Page 1 of 39</span><span class="wd">5970 words</span>
  <svg class="proof" viewBox="0 0 10 8"><path d="M.5 1q2-1 4 0v6q-2-1-4 0zM5 1q2-1 4.500 0v6Q7 6 5 7M6.500 3l2 2m0-2l-2 2" fill="none" stroke="#666" stroke-width=".8"/></svg>
  <span>English (United States)</span>
  <div class="views">
    <button aria-label="Read mode"><svg viewBox="0 0 8 8"><path d="M.5 1H4v6H.5zM4 1h3.500v6H4zM1.500 3h1.500M1.500 5h1.500M5 3h1.500M5 5h1.500"/></svg></button>
    <button class="on" aria-label="Print layout"><svg viewBox="0 0 8 8"><path d="M1 .5h6v7H1zM2 2.500h4M2 4h4M2 5.500h4"/></svg></button>
    <button aria-label="Web layout"><svg viewBox="0 0 8 8"><path d="M.5 1h6v5h-6zM1.500 3h3M1.500 5h2"/><circle cx="6" cy="5.500" r="1.500"/></svg></button>
  </div>
  <div class="zoomer"><button aria-label="Zoom out">−</button><input type="range" min="10" max="500" value="60" aria-label="Zoom"><button aria-label="Zoom in">+</button><span>30%</span></div>
</footer>

<footer class="taskbar">
  <div class="left">
    <button class="weather" aria-label="Weather"><svg viewBox="0 0 18 20"><circle cx="6" cy="7" r="3.500" fill="#f6a623"/><path d="M1 8q3-4 6-1 4-1 4 3H2q-2 0-1-2z" fill="#b9d3f2"/><path d="M4 12q1 6 6 5 4 0 5-5-5 2-11 0z" fill="#e58a2b"/><path d="M3 13q2-3 5-1 3 0 3 3H4q-2 0-1-2z" fill="#c3daf4"/><circle cx="12" cy="5" r="5" fill="#c42b1c"/><text x="12" y="8" text-anchor="middle" fill="#fff">6</text></svg></button>
    <button class="start" aria-label="Start"><svg viewBox="0 0 16 16"><path d="M0 0h7.500v7.500H0zM8.500 0H16v7.500H8.500zM0 8.500h7.500V16H0zM8.500 8.500H16V16H8.500z" fill="#1583d4"/><path d="M0 0h7.500v7.500H0z" fill="#3cb1ee"/></svg></button>
    <label class="search"><svg viewBox="0 0 10 10"><circle cx="4.500" cy="4" r="3.200" fill="none" stroke="#222" stroke-width="1.200"/><path d="M7 6.500L9.500 9" stroke="#222" stroke-width="1.300"/></svg><input type="text" placeholder="Search" aria-label="Search">
      <svg class="castle" viewBox="0 0 32 17"><path d="M1 12q5-5 12-4 10-4 18 1-1 7-8 7H8q-6 0-7-4z" fill="#3b9dc4"/><path d="M4 10l5-4v-3l2 1 1-2 2 3 5 0 1-4 3 2v3l5 3-4 3H8z" fill="#caa05a"/><path d="M4 11l6-2 6 2 8-2 5 2-6 2H9z" fill="#5c8a3a"/><path d="M7 5h2v4H7zM14 4h2v4h-2zM21 2h2v5h-2z" fill="#8f6a35"/><path d="M3 13q8 3 16 0t11 0" stroke="#d8f0f8" fill="none"/></svg></label>
  </div>
  <div class="apps">
    <button aria-label="Task view"><svg viewBox="0 0 16 16"><path d="M6 1h9v9H6z" fill="#fff" stroke="#ddd"/><path d="M2 4h10v10H2z" fill="#2a2a2a"/><path d="M6 4h6v6H6z" fill="#999"/></svg></button>
    <button aria-label="Copilot"><svg viewBox="0 0 16 16"><path d="M5 1h5l2 4H8L5 12H3q-3-1-2-5z" fill="#2f7de0"/><path d="M3 8l3 0L8 2 5 1Q2 2 1 8z" fill="#35c4a4"/><path d="M11 15H6l-2-4h4l3-7h2q3 1 2 5z" fill="#e0529c"/><path d="M13 5l-2 0-3 7-2 3h5q3-1 4-6z" fill="#f08a3c"/><path d="M9 4h5l1 5-3 1-2-1z" fill="#9658dd"/></svg></button>
    <button class="run wide" aria-label="Snipping tool"><svg viewBox="0 0 16 16"><path d="M3 1h8v8H3z" fill="#fff" stroke="#d13438" stroke-dasharray="2 1" stroke-width="1.500"/><path d="M7 6l3 6M14 9L6 10" stroke="#666"/><circle cx="10" cy="13" r="2" fill="none" stroke="#2a7ec9" stroke-width="1.300"/><circle cx="14" cy="9" r="1.500" fill="none" stroke="#2a7ec9"/></svg></button>
    <button aria-label="Nox"><svg viewBox="0 0 16 16"><path d="M8 0l7 4v8l-7 4-7-4V4z" fill="#16161c" stroke="#6a2a6e"/><text x="8" y="10" text-anchor="middle" fill="#3fe0c0" class="t5">nox</text></svg></button>
    <button aria-label="Device tool"><svg viewBox="0 0 16 16"><path d="M0 0h16v16H0z" fill="#0a2a4c"/><path d="M4 3v7q0 3 4 4 4-1 4-4V3M6 6h1M9 6h1M5 9q3 3 6 0" fill="none" stroke="#25a7dd" stroke-width="1.200"/></svg></button>
    <button class="run" aria-label="File Explorer"><svg viewBox="0 0 16 16"><path d="M1 2h5l2 2h7v11H1z" fill="#f7bd36"/><path d="M1 6h14v8H1z" fill="#fcd462"/><path d="M3 11h10v4H3z" fill="#2272b9"/></svg></button>
    <button class="run" aria-label="Edge"><svg viewBox="0 0 16 16"><circle cx="8" cy="8" r="7.500" fill="#1976c8"/><path d="M1 7q1-6 8-6 6 1 6.500 6 0 3-4 3-3 0-2-2-1-4-5-2Q2 7 1 10z" fill="#3ec6a5"/><path d="M9 8q-4 0-2 4 3 3 7 0-2 4-6 4Q2 14 3 9q2-3 6-1z" fill="#0d4f9c"/><path d="M8 8q3-1 4 2 2 0 3-1-1 2-4 2-3 0-3-3z" fill="#fff"/></svg></button>
    <button aria-label="Store"><svg viewBox="0 0 16 16"><path d="M5 3V1h6v2" fill="none" stroke="#2c6fb5"/><path d="M1 3h14v11q0 1-1 1H2q-1 0-1-1z" fill="#173f6e"/><path d="M5 6h2.500v2.500H5z" fill="#f25022"/><path d="M8.500 6H11v2.500H8.500z" fill="#7fba00"/><path d="M5 9.500h2.500V12H5z" fill="#00a4ef"/><path d="M8.500 9.500H11V12H8.500z" fill="#ffb900"/></svg></button>
    <button aria-label="Paint"><svg viewBox="0 0 16 16"><path d="M8 2q7 0 7 6 0 3-4 3-2 0-1 3-1 2-4 1-5-2-5-7 1-6 7-6z" fill="#2aa0cf"/><circle cx="4" cy="7" r="1.500" fill="#f6c343"/><circle cx="7" cy="4.500" r="1.500" fill="#4fc26b"/><circle cx="4.500" cy="11" r="1.500" fill="#e35b45"/><path d="M14 1L9 9l-1 3 3-2 4-8z" fill="#aa6e3c"/></svg></button>
    <button aria-label="Teams"><svg viewBox="0 0 16 16"><circle cx="9" cy="3.500" r="2.500" fill="#7b83eb"/><circle cx="14" cy="4.500" r="1.600" fill="#5059c9"/><path d="M6 7h7v5q-1 3-4 3t-4-3zM13 7h3v4q-1 2-3 2z" fill="#6a70d6"/><path d="M0 4h9v9H0z" fill="#4b53bc"/><path d="M2 6.500h5M4.500 6.500V11" stroke="#fff" stroke-width="1.300"/></svg></button>
    <button aria-label="Firefox"><svg viewBox="0 0 16 16"><circle cx="8" cy="8.500" r="7" fill="#f0532d"/><path d="M8 1q7 3 7 8-1 6-7 7Q2 15 1 9l1-5 2 2q1-2 3-2z" fill="#fb8c24"/><path d="M10 1q5 3 5 7l-2-1q-1-3-3-6z" fill="#fdc83a"/><circle cx="8" cy="9" r="3.500" fill="#7a4bd0"/><path d="M4 7q2-1 4 1l-2 2q2 2 5 0-1 4-4 3Q3 12 4 7z" fill="#fdb32c"/></svg></button>
    <button class="run" aria-label="Corel"><svg viewBox="0 0 16 16"><path d="M0 0h16v16H0z" fill="#0d7a43"/><path d="M1 1l14 5Q8 6 3 12z" fill="#fff"/><path d="M2 15q3-7 13-7v7z" fill="#0b4d9a"/><path d="M2 14q5-7 13-7-7 2-10 8z" fill="#e8f6ef"/></svg></button>
    <button class="run" aria-label="Chrome"><svg viewBox="0 0 16 16"><circle cx="8" cy="8.500" r="7.500" fill="#fbc116"/><path d="M8 8.500L1.500 5Q4 1 8 1t6.500 4z" fill="#e33b2e"/><path d="M8 8.500L1.500 5Q-1 13 7 16l4-6z" fill="#2ba24c"/><circle cx="8" cy="8.500" r="3.600" fill="#fff"/><circle cx="8" cy="8.500" r="2.700" fill="#2f7de0"/><circle cx="13" cy="3" r="2" fill="#6b4a32"/></svg></button>
    <button class="run" aria-label="Zalo"><svg viewBox="0 0 16 16"><circle cx="8" cy="8" r="7.500" fill="#fff" stroke="#2b7de9"/><text x="8" y="10" text-anchor="middle" fill="#1463d8" class="t6">Zalo</text></svg></button>
    <button class="run" aria-label="Reader"><svg viewBox="0 0 16 16"><path d="M0 0h16v16H0z" fill="#f0661e"/><path d="M4 1h8L8 6l4 3-4-1-3 2 2-4z" fill="#fff"/><text x="8" y="15" text-anchor="middle" fill="#fff" class="t4">READER</text></svg></button>
    <button class="run" aria-label="AutoCAD"><svg viewBox="0 0 16 16"><path d="M1 0h14v16H1z" fill="#f1eaea"/><path d="M3 14L7 2h3l4 12h-3l-1-3H6l-1 3zM7 9h2.500L8 5z" fill="#b5242b"/></svg></button>
    <button class="run" aria-label="Word"><svg viewBox="0 0 16 16"><path d="M6 2h9v12H6z" fill="#fff" stroke="#2b579a"/><path d="M9 5h5M9 7h5M9 9h5M9 11h5" stroke="#2b579a"/><path d="M0 2l9-2v16l-9-2z" fill="#2b579a"/><path d="M2 5l1.200 6L4.500 6l1.200 5L7 5" fill="none" stroke="#fff"/></svg></button>
  </div>
  <div class="tray">
    <svg viewBox="0 0 12 12"><path d="M3 8l3-3 3 3"/></svg>
    <svg viewBox="0 0 12 12"><path d="M4 9.500h5a2 2 0 0 0 0-4A3 3 0 0 0 3.500 5 2.300 2.300 0 0 0 4 9.500zM2 2l8.500 9"/></svg>
    <svg viewBox="0 0 12 12"><path d="M1.500 5A4.500 4.500 0 0 1 10 4M10.500 1v3h-3M10 7a4.500 4.500 0 0 1-8 1M1.500 11V8h3"/><circle cx="8.500" cy="9" r="2.800" fill="#e9a23b" stroke="none"/></svg>
    <span class="lang">ENG<br>IN</span>
    <div class="sys3">
      <svg viewBox="0 0 12 12"><path d="M1 5q5-4 10 0M2.500 7q3.500-3 7 0M4.200 8.700q1.800-1.500 3.600 0"/><circle cx="6" cy="10" r=".8" fill="#222"/></svg>
      <svg viewBox="0 0 12 12"><path d="M1 4.500h2l2.500-2.500v8L3 7.500H1zM7 4q1.500 2 0 4M8.700 3q2 3 0 6M10.300 2q3 4 0 8"/></svg>
      <svg viewBox="0 0 12 12"><path d="M2 4h8v5H2z" fill="#222"/><path d="M10.500 5.500v2M1 2l2 3M4 2l-1 3"/></svg>
    </div>
    <time>8:32 PM<br>5/7/2025</time>
    <svg class="bell" viewBox="0 0 12 12"><path d="M2 9q1-1 1-4 0-3 3-3t3 3q0 3 1 4z" fill="#222"/><path d="M5 10.500h2"/></svg>
  </div>
  <div class="mark mark2">Copyright © KhoBanVe.vn</div>
</footer>
</body>
</html>
```

FILE: styles.css
```css
* { box-sizing: border-box; }
body {
  margin: 0;
  height: 100vh;
  display: grid;
  grid-template-rows: auto auto auto auto 1fr auto auto;
  overflow: hidden;
  background: #e6e6e6;
  font: 7px/10px "Open Sans", "Noto Sans", sans-serif;
  color: #444;
}
button, input { font: inherit; color: inherit; }
button { border: 0; background: none; padding: 0; margin: 0; }
input { margin: 0; }
h1, h2, h3, p { margin: 0; font-weight: normal; font-size: inherit; }
svg { display: block; }
small { font-size: 5px; }

/* title bar and tabs */
.top { position: relative; background: #2b579a; color: #dfe8f6; }
.circuit { position: absolute; right: 0; top: 0; width: 320px; height: 35px; }
.titlebar { position: relative; height: 20px; display: flex; align-items: center; justify-content: center; }
h1 { color: #9db7de; }
.wins { position: absolute; right: 9px; top: 5px; display: flex; gap: 20px; }
.wins svg { width: 8px; height: 8px; fill: none; stroke: #7e9bca; stroke-width: 0.8; }
.tabs { position: relative; display: flex; height: 15px; }
.tabs button { padding: 0 7px; }
.tabs .file { padding: 0 15px 0 12px; }
.tabs .on { background: #f1f1f1; color: #2b579a; padding: 0 8px; }
.tell { display: flex; align-items: center; gap: 3px; padding-left: 8px; color: #b7cbea; }
.tell svg { width: 8px; height: 10px; fill: none; stroke: #c9d8f0; }
.tell input { width: 120px; border: 0; padding: 0; background: none; }
.tell input::placeholder { color: #b7cbea; opacity: 1; }
.logo { position: absolute; right: 8px; top: 9px; width: 86px; height: 44px; z-index: 2; }
.logo text { font: bold 14px Roboto, "Liberation Sans", sans-serif; }

/* ribbon */
.ribbon {
  display: grid;
  grid-template-columns: 118px 74px 119px 226px 29px 41px 1fr;
  height: 55px;
  padding-top: 2px;
  background: #f1f1f1;
  border-bottom: 1px solid #d2d2d2;
}
.grp { border-right: 1px solid #dcdcdc; display: flex; flex-direction: column; }
.grp h2 { text-align: center; font-size: 6px; color: #666; }
.tools { display: flex; height: 43px; }
.g-views .tools { padding-left: 2px; }
.g-show .tools { padding-left: 4px; }
.g-zoom .tools, .g-window .tools { padding-left: 2px; }
.big { width: 25px; height: 43px; display: block; text-align: center; white-space: nowrap; padding-top: 2px; align-self: flex-start; line-height: 10px; }
.big svg { width: 20px; height: 18px; margin: 0 auto 3px; }
.big.sel { background: #c6c6c6; }
.w24 { width: 24px; }
.w29 { width: 28px; }
.w30 { width: 30px; }
.w37 { width: 40px; }
.w40 { width: 40px; }
.stack { display: flex; flex-direction: column; gap: 4px; padding: 2px 0 0 1px; }
.stack button, .stack label { display: flex; align-items: center; gap: 1px; height: 10px; white-space: nowrap; }
.stack svg { width: 10px; height: 9px; }
.stack button:disabled { color: #a6a6a6; }
.stack input { appearance: none; display: grid; place-items: center; width: 8px; height: 8px; border: 1px solid #b5b5b5; background: #fff; margin-right: 2px; }
.stack input:checked::before { content: ""; width: 2px; height: 4px; border: solid #444; border-width: 0 1px 1px 0; transform: rotate(40deg); }
.edged { border: solid #dcdcdc; border-width: 0 1px; padding: 2px 5px 0 3px; margin: 0 0 4px 2px; }
.fold { justify-self: end; align-self: end; margin: 0 5px 3px; }
.fold svg { width: 6px; height: 5px; }

/* quick access */
.qat { display: flex; align-items: center; height: 22px; padding-left: 5px; gap: 12px; }
.qat svg { width: 10px; height: 10px; }
.qat .dd { margin-left: -9px; }
.qat .dd svg { width: 4px; }
.qat .again { margin-left: -3px; }

/* rulers */
.rulerrow { display: flex; height: 15px; padding: 2px 0 0 2px; }
.tabstop { width: 11px; height: 11px; background: #fff; border: 1px solid #d0d0d0; font-weight: bold; font-size: 6px; line-height: 8px; }
.hruler { position: relative; display: grid; grid-template-columns: 20px 113px 14px; height: 8px; margin-left: 60px; font-size: 6px; line-height: 8px; }
.hruler .m { background: #c6c6c6; padding-left: 5px; }
.hruler .w { background: #fff; display: grid; grid-template-columns: repeat(7, 14px); padding-left: 7px; }
.hruler i { font-style: normal; text-align: center; }
.mk { position: absolute; width: 6px; height: 12px; top: 0; }
.mk.first { left: 23px; }
.mk.last { left: 130px; }

/* workspace */
.work { position: relative; display: grid; grid-template-columns: 12px 1fr; padding-right: 7px; overflow: hidden; min-height: 0; }
.vruler { width: 9px; height: 173px; margin-left: 3px; border-bottom: 15px solid #c6c6c6; background: #fff; display: grid; grid-template-rows: repeat(11, 14px); font-size: 6px; }
.vruler i { font-style: normal; writing-mode: vertical-rl; transform: rotate(180deg); text-align: center; line-height: 9px; }
.prow { display: flex; justify-content: center; align-items: flex-start; gap: 4px; margin-bottom: 4px; }
.page {
  width: 146px;
  flex: none;
  display: flex;
  flex-direction: column;
  padding: 0 13px 0 21px;
  background: #fff;
  box-shadow: 0 0 0 1px #d9d9d9;
  font: 3px/4px "Liberation Serif", serif;
  color: #000;
  white-space: nowrap;
  overflow: hidden;
}
.page > * { flex: none; }
.r1 .page { height: 173px; padding-bottom: 6px; }
.r2 .page { height: 207px; padding-top: 6px; }
.r1 .t2 { padding-top: 2px; }
.page footer { margin-top: auto; border-top: 1px solid #888; display: flex; justify-content: space-between; color: #444; }
.page u { color: #1c2aa0; }
.page sub { font-size: 2px; line-height: 1px; }
.j { text-align: justify; text-align-last: justify; }
.c { text-align: center; }
.b { font-weight: bold; }
.it { font-style: italic; }
.ul { text-decoration: underline; }
.in { padding-left: 3px; }
.in2 { padding-left: 8px; }
.in3 { padding-left: 11px; }
.s1 { margin-top: 1px; }
.s2 { margin-top: 2px; }
.s3 { margin-top: 3px; }
.s4 { margin-top: 4px; }
.s6 { margin-top: 6px; }
.s7 { margin-top: 7px; }
.s8 { margin-top: 9px; }
.s12 { margin-top: 13px; }
.list p { margin-top: 1px; }
.list.first { padding-top: 1px; }
.list.first p { margin-top: 2px; }
.cover { font-size: 6px; line-height: 8px; text-align: center; margin: 18px 0 33px; padding-left: 6px; }
.who { display: grid; grid-template-columns: 41px 5px 1fr; line-height: 5px; font-weight: bold; }
.task { margin-top: 32px; line-height: 5px; }
.task p + p { padding-left: 4px; }
.bore { width: 100px; height: 98px; }
.bore text, .beam text { font: 2px "Liberation Sans", sans-serif; }
.cap { margin-top: 7px; }
.hd { display: flex; gap: 22px; line-height: 3px; text-align: center; color: #444; border-bottom: 1px solid #999; }
.f { display: flex; align-items: center; gap: 1px; height: 10px; }
.calc .f { height: 9px; }
.fr { display: grid; text-align: center; line-height: 4px; }
.fr > span + span { border-top: 1px solid #777; }
.f.tall { height: 14px; }
.sys { border-left: 1px solid #555; padding-left: 1px; }
.r1 .land { width: 208px; height: 142px; padding: 2px 13px 6px; }
.land .hd { gap: 18px; }
.land .mid { margin-right: 64px; }
.cap4 { margin: 8px 0 1px; }
.soil, .load { border-collapse: collapse; table-layout: fixed; text-align: center; }
.soil { width: 171px; margin-left: -2px; line-height: 4px; }
.soil th, .soil td, .load th, .load td { border: 1px solid #555; padding: 0; font-weight: normal; }
.soil th { background: #d6dce5; height: 20px; }
.soil tr { height: 10px; }
.soil .lo { height: 4px; }
.c8 { width: 8px; }
.c9 { width: 9px; }
.c10 { width: 10px; }
.c11 { width: 11px; }
.c12 { width: 12px; }
.c13 { width: 13px; }
.c14 { width: 14px; }
.load { width: 116px; margin-left: -2px; }
.load tr { height: 8px; }
.load th:first-child { width: 18px; }
.load th:nth-child(2) { width: 23px; }
.beam { width: 112px; }
.b1 { height: 48px; margin-bottom: 3px; }
.b2 { height: 56px; }

/* watermarks */
.mark { position: absolute; z-index: 3; font: 22px/22px "Liberation Sans", sans-serif; color: #b4b4b4; text-shadow: 1px 1px 0 #777, -1px -1px 0 #eee; white-space: nowrap; pointer-events: none; }
.mark1 { left: 446px; top: 274px; }
.mark2 { left: 345px; top: -9px; }

/* status bar */
.status { display: flex; align-items: center; height: 13px; padding: 0 7px 0 4px; background: #f1f1f1; border-top: 1px solid #d0d0d0; font-size: 6px; color: #555; }
.wd { margin-left: 11px; }
.proof { width: 10px; height: 8px; margin: 0 8px 0 10px; }
.views { margin-left: auto; display: flex; align-self: stretch; }
.views button { width: 20px; display: grid; place-items: center; }
.views .on { background: #c6c6c6; }
.views svg { width: 8px; height: 8px; fill: none; stroke: #666; stroke-width: 0.8; }
.zoomer { display: flex; align-items: center; }
.zoomer button { width: 8px; font-size: 11px; font-weight: bold; line-height: 10px; }
.zoomer input { appearance: none; width: 63px; height: 8px; background: linear-gradient(#999, #999) center / 100% 1px no-repeat; }
.zoomer input::-webkit-slider-thumb { appearance: none; width: 3px; height: 7px; background: #555; }
.zoomer span { margin-left: 4px; }

/* taskbar */
.taskbar { position: relative; display: grid; grid-template-columns: 252px 1fr 233px; align-items: center; height: 29px; background: linear-gradient(90deg, #dfe2ea, #e4e7ef 40%, #ecdfe8 62%, #e0e6f4 75%, #e3e3ee); border-top: 1px solid #cfd3dc; color: #222; }
.left { display: flex; align-items: center; }
.weather svg { width: 18px; height: 20px; }
.weather { margin-left: 12px; }
.weather text { font: bold 8px "Open Sans", sans-serif; }
.start { margin-left: 63px; }
.start svg { width: 15px; height: 15px; }
.search { display: flex; align-items: center; flex: 1; height: 19px; margin-left: 9px; padding: 0 2px 0 7px; border-radius: 10px; background: #fff; border: 1px solid #e2e4ea; font-size: 8px; }
.search svg { width: 10px; height: 10px; }
.search input { flex: 1; width: 40px; min-width: 0; border: 0; padding: 0; margin-left: 5px; background: none; }
.search input::placeholder { color: #666; opacity: 1; }
.search .castle { width: 32px; height: 17px; }
.apps { display: grid; grid-template-columns: repeat(17, 1fr); }
.apps button { display: grid; justify-items: center; }
.apps button::after { content: ""; width: 5px; height: 2px; margin-top: 3px; border-radius: 1px; }
.apps .run::after { background: #777; }
.apps .wide::after { width: 9px; }
.apps svg { width: 15px; height: 15px; margin-top: 4px; }
.t4 { font: bold 4px "Liberation Sans", sans-serif; }
.t5 { font: bold 6px "Open Sans", sans-serif; }
.t6 { font: bold 6px "Open Sans", sans-serif; }
.tray { display: flex; align-items: center; padding-left: 39px; gap: 8px; font-size: 7px; }
.tray svg { width: 12px; height: 12px; fill: none; stroke: #333; stroke-width: 1; }
.lang { width: 20px; text-align: center; }
.sys3 { display: flex; gap: 3px; }
.tray time { flex: 1; text-align: right; }
.tray .bell { width: 10px; margin: 0 11px 0 -4px; }
```
